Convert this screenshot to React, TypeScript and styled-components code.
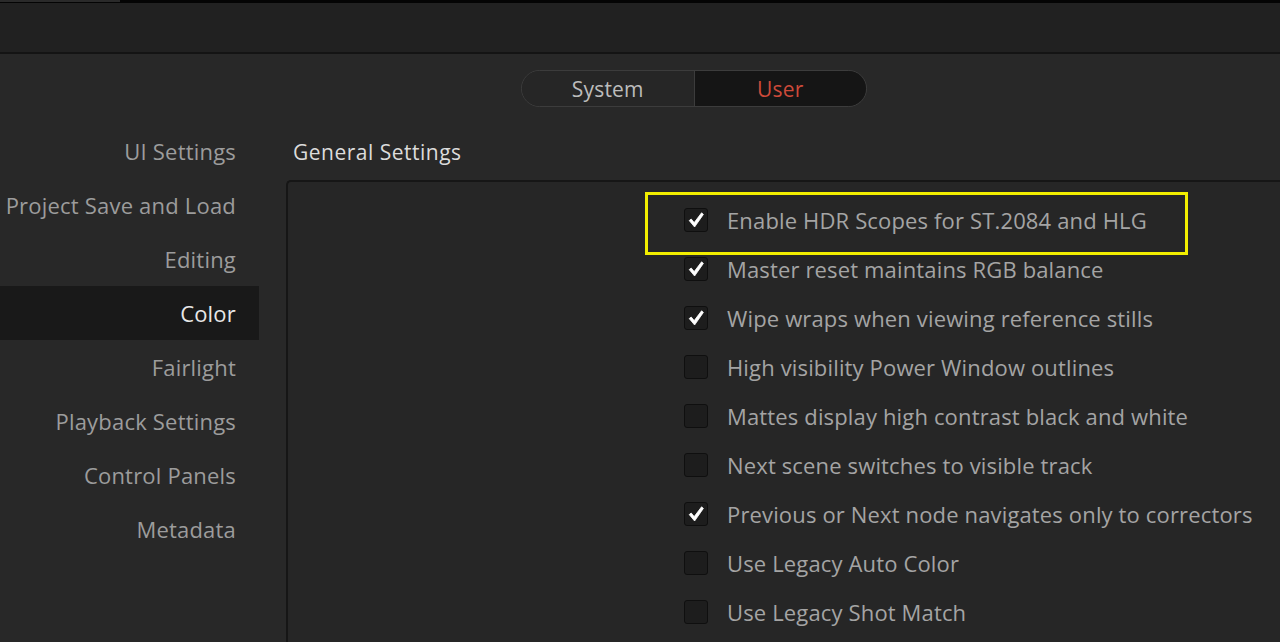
import styled, { createGlobalStyle } from "styled-components";

const GlobalStyle = createGlobalStyle`
  html, body {
    margin: 0;
    padding: 0;
    background: #282828;
    font-family: "Open Sans", "Noto Sans", sans-serif;
    overflow: hidden;
  }
`;

const Page = styled.div`
  width: 1280px;
  height: 642px;
  display: flex;
  flex-direction: column;
  background: #282828;
  overflow: hidden;
`;

const TopStrip = styled.div`
  height: 3px;
  background: #040404;
  display: flex;
`;

const StripTab = styled.div`
  width: 120px;
  height: 2px;
  background: #2a2a2a;
`;

const Header = styled.div`
  height: 49px;
  background: #212121;
  border-bottom: 2px solid #141414;
`;

const Body = styled.div`
  flex: 1;
  display: flex;
  flex-direction: column;
`;

const ToggleRow = styled.div`
  display: flex;
  padding: 16px 0 0 521px;
  height: 37px;
`;

const Toggle = styled.div`
  display: flex;
  width: 346px;
  height: 37px;
  box-sizing: border-box;
  border: 1px solid #3c3c3c;
  border-radius: 19px;
  overflow: hidden;
`;

const ToggleOption = styled.div<{ $active?: boolean }>`
  flex: 1;
  display: flex;
  align-items: center;
  justify-content: center;
  padding-top: 1px;
  font-size: 21px;
  letter-spacing: 0.2px;
  background: ${(p) => (p.$active ? "#151515" : "#262626")};
  color: ${(p) => (p.$active ? "#cc4a3a" : "#bcbcbc")};
  & + & {
    border-left: 1px solid #3c3c3c;
  }
`;

const Columns = styled.div`
  display: flex;
  margin-top: 17px;
  flex: 1;
`;

const Sidebar = styled.nav`
  width: 259px;
  display: flex;
  flex-direction: column;
`;

const NavItem = styled.div<{ $active?: boolean }>`
  height: 54px;
  display: flex;
  align-items: center;
  justify-content: flex-end;
  padding-right: 23px;
  font-size: 22px;
  letter-spacing: 0.2px;
  white-space: nowrap;
  color: ${(p) => (p.$active ? "#e8e8e8" : "#9c9c9c")};
  background: ${(p) => (p.$active ? "#191919" : "transparent")};
`;

const Main = styled.section`
  flex: 1;
  display: flex;
  flex-direction: column;
  margin-left: 27px;
`;

const Title = styled.div`
  height: 56px;
  display: flex;
  align-items: center;
  padding-left: 7px;
  font-size: 21px;
  letter-spacing: 0.5px;
  color: #dcdcdc;
`;

const Panel = styled.div`
  flex: 1;
  background: #262626;
  border-top: 2px solid #161616;
  border-left: 2px solid #161616;
  border-top-left-radius: 5px;
  padding: 13px 0 0 396px;
  display: flex;
  flex-direction: column;
`;

const Option = styled.div`
  position: relative;
  height: 49px;
  display: flex;
  align-items: center;
  gap: 19px;
`;

const Box = styled.span`
  width: 24px;
  height: 24px;
  box-sizing: border-box;
  border: 1px solid #0f0f0f;
  border-radius: 3px;
  background: #1d1d1d;
  display: flex;
  align-items: center;
  justify-content: center;
`;

const Label = styled.span`
  font-size: 22px;
  letter-spacing: 0.15px;
  color: #a4a4a4;
  white-space: nowrap;
`;

const Highlight = styled.div`
  position: absolute;
  left: -39px;
  top: -3px;
  width: 543px;
  height: 63px;
  box-sizing: border-box;
  border: 3px solid #f2ee00;
  pointer-events: none;
`;

// tapered tick, thin at the short stroke and heavier along the long one
const Check = () => (
  <svg width="18" height="18" viewBox="0 0 18 18">
    <path
      d="M2.2 9.6 L4.2 8 L7.2 11.6 L14.6 1.8 L16.4 3.4 L7.6 16 Z"
      fill="#ffffff"
      stroke="#ffffff"
      strokeWidth="0.8"
      strokeLinejoin="round"
    />
  </svg>
);

const sections = [
  "UI Settings",
  "Project Save and Load",
  "Editing",
  "Color",
  "Fairlight",
  "Playback Settings",
  "Control Panels",
  "Metadata",
];

const options: { label: string; checked: boolean }[] = [
  { label: "Enable HDR Scopes for ST.2084 and HLG", checked: true },
  { label: "Master reset maintains RGB balance", checked: true },
  { label: "Wipe wraps when viewing reference stills", checked: true },
  { label: "High visibility Power Window outlines", checked: false },
  { label: "Mattes display high contrast black and white", checked: false },
  { label: "Next scene switches to visible track", checked: false },
  { label: "Previous or Next node navigates only to correctors", checked: true },
  { label: "Use Legacy Auto Color", checked: false },
  { label: "Use Legacy Shot Match", checked: false },
];

export default function App() {
  return (
    <Page>
      <GlobalStyle />
      <TopStrip>
        <StripTab />
      </TopStrip>
      <Header />
      <Body>
        <ToggleRow>
          <Toggle>
            <ToggleOption>System</ToggleOption>
            <ToggleOption $active>User</ToggleOption>
          </Toggle>
        </ToggleRow>
        <Columns>
          <Sidebar>
            {sections.map((s) => (
              <NavItem key={s} $active={s === "Color"}>
                {s}
              </NavItem>
            ))}
          </Sidebar>
          <Main>
            <Title>General Settings</Title>
            <Panel>
              {options.map((o, i) => (
                <Option key={o.label}>
                  {i === 0 && <Highlight />}
                  <Box>{o.checked && <Check />}</Box>
                  <Label>{o.label}</Label>
                </Option>
              ))}
            </Panel>
          </Main>
        </Columns>
      </Body>
    </Page>
  );
}
